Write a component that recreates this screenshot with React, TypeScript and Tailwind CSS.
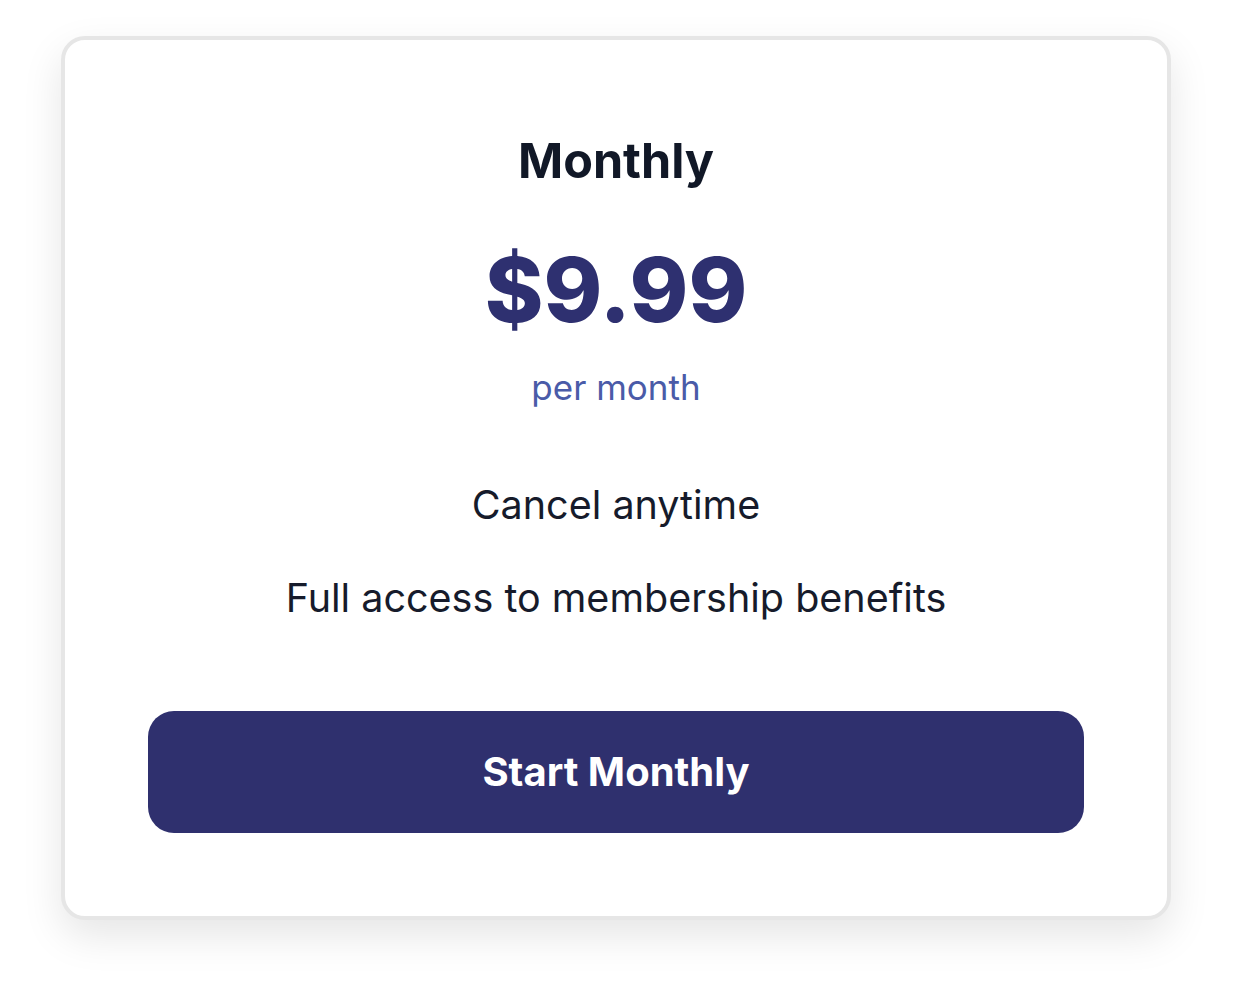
const perks = ["Cancel anytime", "Full access to membership benefits"];

const PlanCard = () => (
  <div className="w-[1110px] h-[884px] flex flex-col items-center rounded-[24px] border-4 border-[#e6e6e6] bg-white px-[83px] pt-[91px] pb-[83px] shadow-[0_16px_40px_rgba(0,0,0,0.1)]">
    <h2 className="text-[48.5px] leading-[60px] font-bold text-[#111827]">Monthly</h2>
    <div className="mt-[49px] text-[89px] leading-[100px] font-extrabold text-[#2e3070]">$9.99</div>
    <div className="mt-[29px] text-[35px] leading-[36px] text-[#4a5ba8]">per month</div>
    <ul className="mt-[75px] flex flex-col items-center gap-[43px]">
      {perks.map((perk) => (
        <li key={perk} className="text-[39.5px] leading-[50px] text-[#161b2b]">
          {perk}
        </li>
      ))}
    </ul>
    <button className="mt-[88px] h-[122px] w-full shrink-0 rounded-[26px] bg-[#2f306e] text-[40px] font-bold text-white">
      Start Monthly
    </button>
  </div>
);

export default function App() {
  return (
    <div
      className="min-h-[989px] w-[1242px] bg-white pl-[61px] pt-[36px]"
      style={{ fontFamily: "Inter, 'Noto Sans', sans-serif" }}
    >
      <PlanCard />
    </div>
  );
}
